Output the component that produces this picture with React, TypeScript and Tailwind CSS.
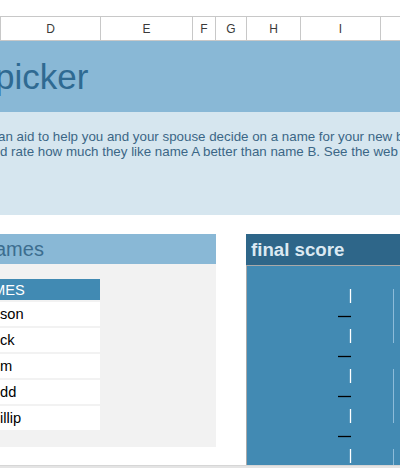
import React from 'react';

const columns = [
  { label: 'D', width: 'w-[100px]' },
  { label: 'E', width: 'w-[92px]' },
  { label: 'F', width: 'w-[23px]' },
  { label: 'G', width: 'w-[31px]' },
  { label: 'H', width: 'w-[54px]' },
  { label: 'I', width: 'w-[80px]' },
  { label: 'J', width: 'w-[100px]' },
];

const names = ['son', 'ck', 'm', 'dd', 'illip'];

const ScoreChart: React.FC = () => {
  const ticks = [23, 63, 103, 143, 183];
  const dashes = [50.5, 90.5, 130.5, 170.5];
  const guides: [number, number][] = [[23, 77], [103, 157], [183, 199]];
  return (
    <svg width="153" height="199" viewBox="0 0 153 199" className="block">
      {guides.map(([a, b]) => (
        <line key={a} x1="146.5" y1={a} x2="146.5" y2={b} stroke="#8dbbd9" strokeWidth="1" />
      ))}
      {ticks.map((y) => (
        <line key={y} x1="103.5" y1={y} x2="103.5" y2={y + 14} stroke="#ffffff" strokeWidth="1.3" />
      ))}
      {dashes.map((y) => (
        <line key={y} x1="91" y1={y} x2="104" y2={y} stroke="#000000" strokeWidth="1.3" />
      ))}
    </svg>
  );
};

export default function App() {
  return (
    <div className="w-[400px] h-[468px] overflow-hidden bg-white font-['Liberation_Sans',Arial,sans-serif]">
      <div className="h-[16px]" />

      {/* column letters */}
      <div className="flex h-[25px] border-t border-b border-l border-[#c8c8c8]">
        {columns.map((c) => (
          <div
            key={c.label}
            className={`${c.width} shrink-0 border-r border-[#c8c8c8] flex items-center justify-center text-[12px] text-[#3a3a3a]`}
          >
            {c.label}
          </div>
        ))}
      </div>

      {/* title */}
      <div className="h-[71px] bg-[#89b8d6] overflow-hidden pt-[18px]">
        <div className="ml-[-5px] text-[35px] leading-none text-[#2f6a92] whitespace-nowrap">picker</div>
      </div>

      {/* description */}
      <div className="h-[103px] bg-[#d6e6ef] overflow-hidden pt-[17px] text-[13.33px] leading-[15px] text-[#3b6686] whitespace-nowrap">
        <div className="ml-[-2px]">an aid to help you and your spouse decide on a name for your new baby.</div>
        <div>d rate how much they like name A better than name B. See the web site for details.</div>
      </div>

      <div className="h-[19px]" />

      <div className="flex h-[231px]">
        {/* names panel */}
        <div className="w-[216px] shrink-0 flex flex-col">
          <div className="h-[30px] bg-[#89b8d6] flex items-center overflow-hidden">
            <span className="ml-[-5px] text-[20px] text-[#3c6d8f] whitespace-nowrap">ames</span>
          </div>
          <div className="h-[183px] bg-[#f2f2f2] pt-[15px]">
            <div className="w-[100px] h-[21px] bg-[#418ab3] flex items-center overflow-hidden">
              <span className="ml-[-7px] text-[14.67px] text-white">MES</span>
            </div>
            <div className="flex flex-col gap-[2px] mt-[2px]">
              {names.map((n) => (
                <div key={n} className="w-[100px] h-[24px] bg-white flex items-center overflow-hidden">
                  <span className="text-[14.67px] text-black whitespace-nowrap">{n}</span>
                </div>
              ))}
            </div>
          </div>
        </div>

        <div className="w-[30px] shrink-0" />

        {/* final score panel */}
        <div className="flex-1 flex flex-col">
          <div className="h-[31px] bg-[#2e6689] flex items-center pl-[5px]">
            <span className="text-[18.67px] font-bold text-[#dbe9f2] whitespace-nowrap">final score</span>
          </div>
          <div className="h-[200px] bg-[#428ab3] border-t border-l border-[#a9a9a9]">
            <ScoreChart />
          </div>
        </div>
      </div>

      <div className="h-[3px] border-t border-[#d6d6d6] bg-[#e4e4e4]" />
    </div>
  );
}
